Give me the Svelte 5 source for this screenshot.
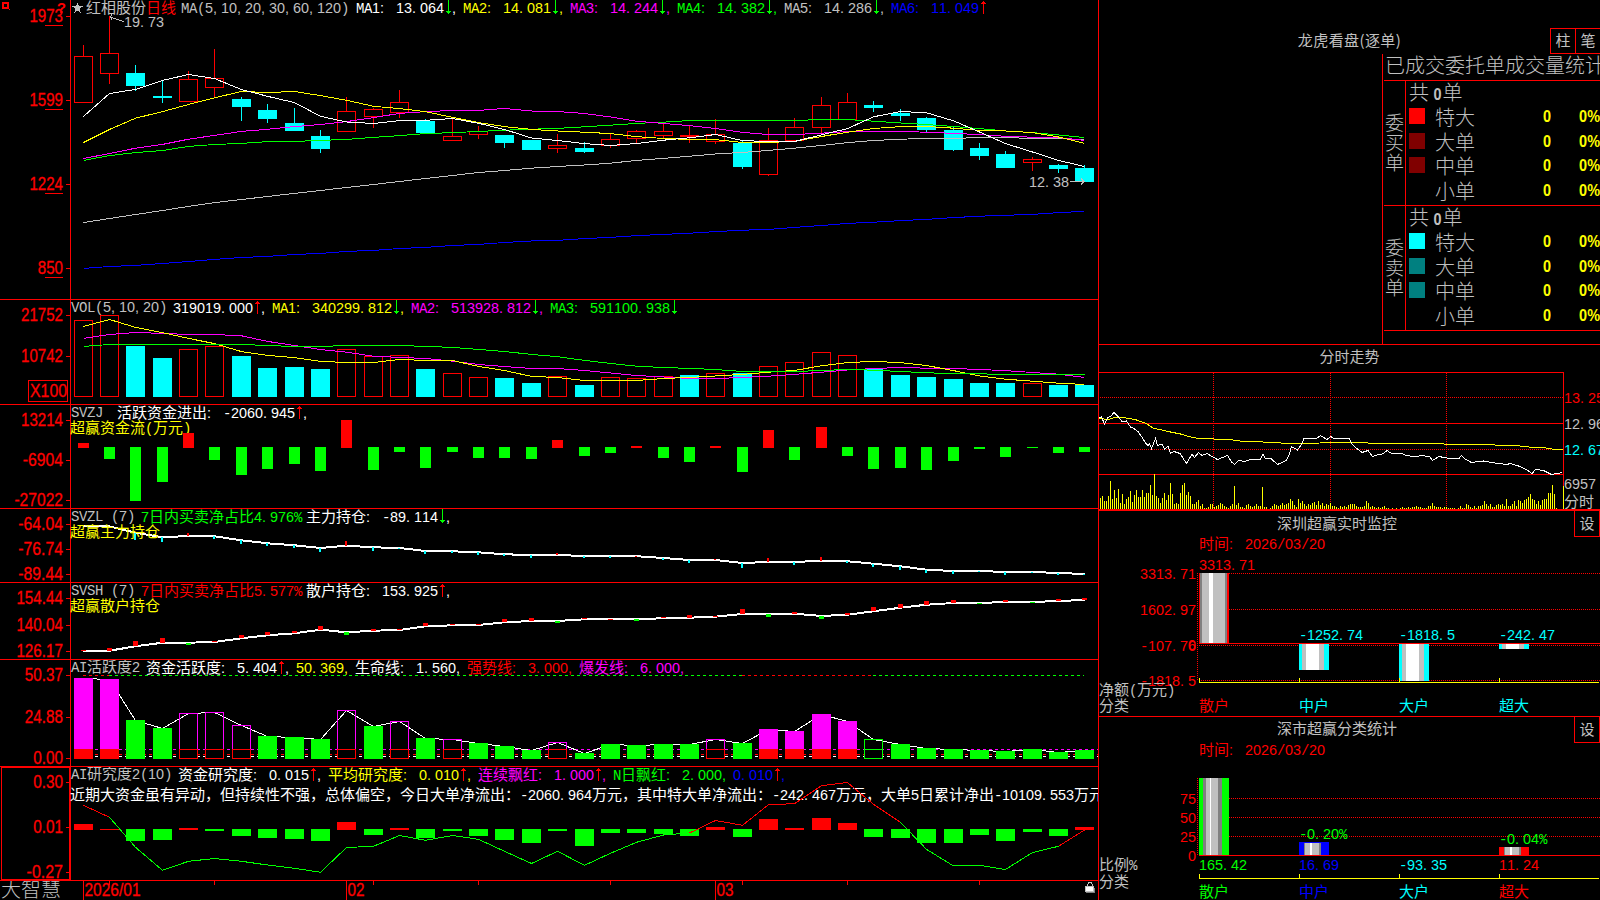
<script>
    const RED = '#ff0000'
    const CYAN = '#00ffff'
    const GREEN = '#00ff00'
    const YELLOW = '#ffff00'
    const PINK = '#ff00ff'
    const GRAY = '#c0c0c0'
    const WHITE = '#ffffff'
    const BLUE = '#0000ff'

    // left edge and centre of the nth day column
    const left = (i) => Math.floor(74.17 + 26.36 * i)
    const mid = (i) => left(i) + 9.5

    const points = (ys, from = 0, to = ys.length - 1) =>
        ys.slice(from, to + 1).map((y, i) => `${mid(i + from)},${y}`).join(' ')

    // splits a label into digit, latin (8px cells) and chinese (15px) runs
    function runs(s, x) {
        const out = []
        for (const part of s.match(/[0-9.,:]+|[^0-9.,:\u0080-\uffff]+|[\u0080-\uffff]+/g)) {
            const cjk = part.charCodeAt(0) > 127
            const num = /^[0-9.,:]/.test(part)
            const xs = cjk ? x : [...part].map((c, i) => x + i * 8).join(' ')
            out.push({ s: part, xs, cjk, num })
            x += part.length * (cjk ? 15 : 8)
        }
        return out
    }
    const width = (s) => [...s].reduce((w, c) => w + (c.charCodeAt(0) > 127 ? 15 : 8), 0)
    const axisWidth = (s) => [...s].reduce((w, c) => w + (c === '.' ? 4.6 : c === '-' ? 6.6 : c === '/' ? 6 : 8.4), 0)

    // high, body top, body bottom, low, rising
    const candles = [
        [45, 56, 103, 103, 1], [16, 53, 74, 84, 1], [65, 73, 86, 91, 0], [80, 96, 98, 103, 0], [71, 79, 102, 102, 1],
        [49, 78, 88, 97, 1], [97, 99, 107, 121, 0], [104, 110, 119, 123, 0], [108, 123, 131, 131, 0], [130, 136, 149, 153, 0],
        [97, 111, 132, 132, 1], [108, 109, 117, 128, 1], [90, 102, 113, 118, 1], [119, 121, 133, 133, 0], [118, 136, 141, 141, 1],
        [126, 131, 135, 139, 1], [135, 135, 143, 148, 0], [140, 140, 150, 150, 0], [134, 145, 149, 153, 1], [142, 148, 152, 153, 0],
        [134, 139, 146, 148, 1], [130, 131, 139, 144, 1], [124, 131, 136, 139, 1], [126, 135, 137, 143, 1], [119, 134, 142, 144, 1],
        [141, 143, 167, 169, 0], [128, 140, 175, 176, 1], [118, 127, 141, 141, 1], [97, 105, 128, 133, 1], [93, 102, 120, 120, 1],
        [101, 105, 108, 112, 0], [109, 113, 116, 121, 0], [117, 118, 130, 132, 0], [127, 130, 150, 151, 0], [143, 148, 156, 160, 0],
        [151, 154, 168, 168, 0], [157, 159, 163, 171, 1], [164, 165, 169, 173, 0], [165, 168, 182, 182, 0]
    ]

    const priceLines = [
        [BLUE, [268.4, 266.5, 265.4, 263.5, 261.5, 259.4, 257.5, 256.4, 254.5, 253.4, 251.4, 250.4, 248.5, 247.4, 245.5, 244.4, 242.5, 241, 240.4, 238.6, 237.4, 235.6, 234.4, 233.2, 231.6, 230.2, 229.4, 227.4, 225.5, 223.4, 222.2, 220.6, 219.4, 217.6, 216.2, 215.3, 214.4, 212.6, 211.4]],
        [GRAY, [222.5, 218.5, 214.5, 210.5, 206.4, 202.6, 199.5, 196.5, 193.4, 190.5, 187.5, 184.5, 181.5, 178.5, 175.5, 172.5, 170.5, 168.2, 166.5, 165, 163.2, 160.4, 158.4, 156.2, 154, 152.4, 150.4, 148.2, 145.5, 142.6, 140.5, 139.2, 138.5, 138.5, 137.5, 137.5, 138.5, 138.5, 139.5]],
        [GREEN, [160.4, 155.6, 152.6, 150.5, 146.4, 144.5, 143.4, 141.6, 141.4, 140.4, 139.4, 137.4, 135.6, 133.6, 132.6, 131.5, 130.2, 129.2, 128.4, 126.8, 125.2, 123.4, 122.2, 120.5, 120.5, 120.5, 120.5, 120.5, 119.5, 119.5, 121.2, 123, 124.5, 126.5, 128.6, 131, 132.6, 135, 137.5]],
        [PINK, [158.5, 153.5, 148.2, 144.4, 139.2, 135.4, 131.4, 129.3, 126.6, 124.5, 121.6, 117.6, 113.4, 111.6, 110.5, 110.4, 108.5, 111, 111.5, 113.5, 117, 121.2, 123.5, 125.6, 128.5, 132.4, 134.5, 134.5, 133.2, 131.5, 131.5, 131.5, 132.2, 133.4, 134.6, 136.3, 137.2, 137.6, 140.4]],
        [YELLOW, [142.5, 129.5, 118.2, 111.6, 104.5, 97.8, 91.5, 92.5, 91.5, 95.6, 100.3, 106.3, 108.6, 111.6, 117.4, 122.6, 126.6, 129.4, 131, 132.2, 133.6, 136.6, 138.5, 139.4, 139.6, 142.5, 142.5, 141.3, 136.5, 132.2, 128.5, 126.6, 126.5, 128.2, 130.4, 131, 132.6, 137, 143.4]],
        [WHITE, [116.5, 93.5, 89.4, 80.4, 74.5, 78.5, 89.6, 96.3, 102.6, 116.3, 122, 123.5, 120.6, 120.3, 118.5, 123.3, 129.5, 138, 140.5, 143.6, 145.5, 143.5, 140.2, 137.8, 134.5, 140.6, 141.5, 141.5, 134.8, 128.6, 116.8, 111.5, 112.8, 120.8, 132, 143.6, 152, 160.4, 166.5]]
    ]

    const volumes = [
        320, 315, 346, 358, 349, 346, 356, 368, 367, 369, 349, 356, 355, 369, 373, 377, 378, 383, 376, 385,
        377, 378, 376, 375, 373, 373, 366, 362, 352, 355, 369, 375, 377, 379, 383, 383, 383, 385, 385
    ]
    const volRising = (i) => candles[i][4] && i !== 23

    const volLines = [
        [PINK, [338.4, 334.5, 332.5, 333.4, 334.5, 334.5, 335.8, 341.4, 345.5, 349.5, 352.2, 356.2, 357.4, 358.5, 361.2, 364.5, 366.5, 368.5, 368.5, 370.5, 373, 375.5, 377, 378.5, 378.5, 377.5, 376.2, 374.4, 372.2, 370, 368.5, 367.5, 368.2, 368.5, 369.5, 370.6, 372.5, 374.2, 377.5]],
        [YELLOW, [326.5, 319.5, 327.4, 332.6, 338.4, 343.6, 351.6, 355.4, 357.6, 361.4, 362.5, 362.5, 359.5, 360.4, 360.5, 366.4, 370.5, 376.4, 377.5, 380.5, 380.5, 380.5, 378.5, 377.4, 376, 374.4, 372.2, 370.4, 365.8, 362.6, 361.4, 362.6, 365.5, 370.6, 376, 379.2, 381.2, 383.2, 384.5]],
        [GREEN, [346.4, 344.5, 344.5, 344.5, 344.5, 344.5, 344.5, 345.5, 346.5, 346.5, 345.5, 345.5, 345.5, 346.4, 347.4, 349.4, 351.5, 354.4, 356.7, 360.4, 363.4, 366.2, 367.5, 368.4, 369.5, 371.5, 371.5, 371.5, 370.5, 369.5, 370.2, 371.5, 372.8, 373.5, 373.8, 374.5, 374.5, 374.5, 374.5]]
    ]

    // bar ends around the zero row at 447
    const flow = [
        443, 459, 501, 482, 433, 460, 475, 469, 464, 471, 420, 470, 452, 468, 452, 458, 458, 459, 440, 456,
        453, 446, 458, 462, 446, 472, 430, 460, 427, 456, 469, 468, 470, 461, 449, 457, 448, 453, 452
    ]

    const mainHold = [
        525.7, 526.5, 532.7, 537.3, 536, 536.3, 540.3, 543.3, 545.3, 548, 545.7, 547.3, 548, 551, 551.3, 552.3, 554.3, 555, 555, 556,
        556, 556.2, 558, 560, 560, 563, 562, 562, 560.7, 561.3, 563.7, 566.3, 569.7, 571, 571, 572, 572, 573, 574
    ]
    const mainTicks = [
        525, 528, 540, 542, 533, 539, 544, 546, 548, 552, 541, 551, 549, 554, 553, 555, 556, 558, 553, 558,
        558, 556, 560, 563, 559, 568, 558, 565, 557, 563, 567, 570, 573, 574, 572, 575, 573, 575, 575
    ]
    const retailHold = [
        651, 650.7, 646.3, 642.7, 642.7, 642, 638.3, 635.3, 633.3, 629.7, 632.3, 630.7, 630, 626.3, 625.3, 625, 622.3, 621, 621, 619.3,
        619, 619, 618.3, 617.7, 616.7, 614, 613.7, 613.7, 616, 614.7, 611.3, 607.7, 604.7, 603, 603, 602, 602, 601, 600
    ]
    const retailTicks = [
        650, 648, 641, 638, 645, 641, 635, 632, 631, 626, 635, 629, 629, 623, 624, 624, 619, 618, 623, 618,
        618.5, 621, 617, 615, 616, 609, 617, 612, 619, 613, 607, 604, 601, 600, 604, 600, 603, 599, 598
    ]

    // M / G filled, m / g outlined
    const activity = [
        ['M', 678], ['M', 679], ['G', 720], ['G', 728], ['m', 713], ['m', 712], ['m', 725], ['G', 736], ['G', 737], ['G', 739],
        ['m', 710], ['G', 726], ['m', 721], ['G', 738], ['m', 739], ['G', 743], ['G', 746], ['G', 750], ['m', 742], ['G', 753],
        ['G', 744], ['G', 745], ['G', 744], ['G', 744], ['m', 739], ['G', 743], ['M', 729], ['M', 731], ['M', 714], ['M', 721],
        ['g', 739], ['G', 744], ['G', 748], ['G', 749], ['G', 750], ['G', 751], ['G', 749], ['G', 752], ['G', 750]
    ]

    const research = [
        824, 829, 841, 840, 828, 831, 836, 838, 839, 841, 822, 835, 828, 838, 831, 836, 840, 843, 831, 846,
        833, 833, 834, 836, 827, 837, 819, 828, 818, 823, 837, 838, 843, 843, 835, 841, 832, 836, 827
    ]
    const researchLine = [
        805.3, 817.3, 847.3, 870.3, 861.3, 858.5, 861.3, 865, 868.3, 872.3, 847.5, 846.3, 835.5, 840.3, 835.5, 839.3, 851.3, 863.5, 851.3, 865.3,
        853.3, 842.3, 835, 833, 820.5, 825.3, 804.7, 803.7, 785.7, 782.5, 804.3, 822.3, 849.3, 866, 865.3, 869.5, 852.5, 846.3, 830
    ]
    const researchParts = [[0, 1, RED], [1, 23, GREEN], [23, 31, RED], [31, 37, GREEN], [37, 38, RED]]

    const legends = {
        price: [
            { x: 86, y: 13, s: '红相股份', c: GRAY },
            { x: 146, y: 13, s: '日线', c: RED },
            { x: 181, y: 13, s: 'MA(5,10,20,30,60,120)', c: GRAY },
            { x: 356, y: 13, s: 'MA1: 13.064', c: WHITE, dir: -1, comma: true },
            { x: 463, y: 13, s: 'MA2: 14.081', c: YELLOW, dir: -1, comma: true },
            { x: 570, y: 13, s: 'MA3: 14.244', c: PINK, dir: -1, comma: true },
            { x: 677, y: 13, s: 'MA4: 14.382', c: GREEN, dir: -1, comma: true },
            { x: 784, y: 13, s: 'MA5: 14.286', c: GRAY, dir: -1, comma: true },
            { x: 891, y: 13, s: 'MA6: 11.049', c: BLUE, dir: 1 }
        ],
        vol: [
            { x: 71, y: 312, s: 'VOL(5,10,20)', c: GRAY },
            { x: 173, y: 313, s: '319019.000', c: WHITE, dir: 1, comma: true },
            { x: 272, y: 313, s: 'MA1: 340299.812', c: YELLOW, dir: -1, comma: true },
            { x: 411, y: 313, s: 'MA2: 513928.812', c: PINK, dir: -1, comma: true },
            { x: 550, y: 313, s: 'MA3: 591100.938', c: GREEN, dir: -1 }
        ],
        flow: [
            { x: 71, y: 417, s: 'SVZJ', c: GRAY },
            { x: 117, y: 418, s: '活跃资金进出: -2060.945', c: WHITE, dir: 1, comma: true },
            { x: 70, y: 433, s: '超赢资金流(万元)', c: YELLOW }
        ],
        main: [
            { x: 71, y: 521, s: 'SVZL (7)', c: GRAY },
            { x: 141, y: 522, s: '7日内买卖净占比4.976%', c: GREEN },
            { x: 306, y: 522, s: '主力持仓: -89.114', c: WHITE, dir: -1, comma: true },
            { x: 70, y: 537, s: '超赢主力持仓', c: YELLOW }
        ],
        retail: [
            { x: 71, y: 595, s: 'SVSH (7)', c: GRAY },
            { x: 141, y: 596, s: '7日内买卖净占比5.577%', c: RED },
            { x: 306, y: 596, s: '散户持仓: 153.925', c: WHITE, dir: 1, comma: true },
            { x: 70, y: 611, s: '超赢散户持仓', c: YELLOW }
        ],
        activity: [
            { x: 71, y: 672, s: 'AI活跃度2', c: GRAY },
            { x: 146, y: 673, s: '资金活跃度: 5.404', c: WHITE, dir: 1, comma: true },
            { x: 296, y: 673, s: '50.369,', c: YELLOW },
            { x: 355, y: 673, s: '生命线: 1.560,', c: WHITE },
            { x: 467, y: 673, s: '强势线: 3.000,', c: RED },
            { x: 579, y: 673, s: '爆发线: 6.000,', c: PINK }
        ],
        research: [
            { x: 71, y: 779, s: 'AI研究度2(10)', c: GRAY },
            { x: 178, y: 780, s: '资金研究度: 0.015', c: WHITE, dir: 1, comma: true },
            { x: 328, y: 780, s: '平均研究度: 0.010', c: YELLOW, dir: 1, comma: true },
            { x: 478, y: 780, s: '连续飘红: 1.000', c: PINK, dir: 1, comma: true },
            { x: 613, y: 780, s: 'N日飘红: 2.000,', c: GREEN },
            { x: 733, y: 780, s: '0.010', c: BLUE, dir: 1, comma: true },
            { x: 70, y: 800, s: '近期大资金虽有异动，但持续性不强，总体偏空，今日大单净流出：-2060.964万元，其中特大单净流出：-242.467万元，大单5日累计净出-10109.553万元', c: WHITE }
        ]
    }

    const orders = [
        { side: '委买单', rows: [['特大', '#ff0000'], ['大单', '#800000'], ['中单', '#800000'], ['小单', 'transparent']] },
        { side: '委卖单', rows: [['特大', '#00ffff'], ['大单', '#008080'], ['中单', '#008080'], ['小单', 'transparent']] }
    ]

    const tickPrice = '1099,418 1101.5,417 1104.5,424 1108,417.5 1111,416 1114,412.5 1118,416.5 1122.5,422 1126.5,421 1130.5,427 1134,428.5 1138,431.5 1141.5,436.5 1146,443.5 1148,445.5 1149.5,443.5 1151.5,448.5 1155.5,438.5 1157.5,445.5 1162,444 1164.5,449 1168,446.5 1170.5,453.5 1174,451.5 1180,453.5 1186.5,463.5 1192,454 1194.5,457.5 1198.5,452.5 1202,455.5 1207,453.5 1213,457 1217.5,459.5 1227.5,455.5 1231.5,462 1234.5,464.5 1238.5,460.5 1245,461.5 1250,459.5 1260,460 1263,454.5 1265.5,458.5 1271.5,459 1277.5,464.5 1286.5,460.5 1289.5,454 1291.5,446.5 1297.5,450 1300.5,446 1304,438.5 1316.5,438.5 1320.5,435.5 1327,439.5 1330.5,436.5 1334,438.5 1349.5,438.5 1352,444 1355.5,447.5 1362,452.5 1368,450.5 1372.5,456.5 1378.5,454.5 1382.5,454 1387,450.5 1390.5,453 1401.5,453.5 1406.5,455.5 1416.5,457 1420.5,455.5 1429.5,456.5 1432.5,460.5 1439,456.5 1446.5,458 1458.5,459 1461.5,455.5 1465,459 1471.5,462.5 1483.5,461 1495,463 1506.5,464.5 1510.5,463.5 1518.5,466 1526.5,469.5 1532,473.5 1535.5,469.5 1543.5,470.5 1551.5,474.5 1562.5,472.5'
    const tickAverage = '1099,418.5 1108,419.5 1115,417.5 1123.5,417.5 1135,419.5 1146.5,423.5 1153,428 1168,431.5 1183,434.5 1188,436.5 1198,438.5 1230,439.5 1243,441.5 1263,442 1290,443.5 1320,443 1330,442.3 1366,442.4 1370,443.5 1443,443.6 1446,444.6 1495,445 1498,445.5 1520,446 1533,447.5 1546,448 1555,449.5 1563,449.5'
    // one bar every 2px
    const minuteBars = [
        11, 13, 8, 8, 13, 28, 10, 19, 11, 20, 6, 15, 5, 10, 12, 18, 7, 14, 19, 12, 12, 19, 12, 16, 16, 24, 14, 35, 13, 11, 6, 11, 16,
        9, 14, 26, 15, 5, 6, 5, 16, 24, 26, 14, 17, 13, 5, 5, 7, 9, 3, 5, 1, 1, 2, 5, 5, 2, 3, 4, 6, 5, 3, 2, 1, 3, 5, 23, 4, 6, 2, 2, 1,
        4, 5, 3, 2, 3, 5, 3, 3, 22, 2, 2, 0, 1, 3, 5, 4, 3, 4, 6, 4, 5, 6, 10, 8, 4, 2, 10, 6, 8, 5, 3, 5, 4, 6, 7, 4, 8, 4, 6, 3, 5, 4, 6, 3,
        3, 2, 1, 3, 2, 3, 2, 4, 5, 5, 5, 3, 2, 2, 2, 3, 8, 6, 2, 3, 2, 1, 2, 1, 2, 3, 1, 1, 0, 1, 0, 1, 0, 1, 2, 1, 1, 2, 1, 2, 2, 3, 2, 2,
        1, 1, 1, 3, 3, 6, 3, 2, 2, 2, 1, 2, 2, 1, 1, 1, 1, 0, 1, 3, 1, 1, 5, 4, 2, 1, 3, 1, 3, 3, 4, 8, 5, 3, 5, 2, 2, 4, 5, 4, 5, 3, 10, 3, 3, 5,
        8, 3, 9, 8, 6, 9, 10, 12, 15, 10, 9, 5, 8, 4, 9, 10, 10, 16, 16, 24, 15, 1
    ]

    // stripes are [offset, width, colour] across the 30px bar
    const netBars = [
        { x: 1199, y: 573, h: 70, name: '散户', c: RED, value: '3313.71', ty: 570, stripes: [[0, 30, RED], [1, 27, '#808080'], [3, 23, GRAY], [10, 4, WHITE]] },
        { x: 1299, y: 644, h: 26, name: '中户', c: CYAN, value: '-1252.74', ty: 640, stripes: [[0, 30, CYAN], [3, 22, GRAY], [7, 13, WHITE]] },
        { x: 1399, y: 644, h: 37, name: '大户', c: CYAN, value: '-1818.5', ty: 640, stripes: [[0, 30, CYAN], [3, 22, GRAY], [7, 13, WHITE]] },
        { x: 1499, y: 644, h: 5, name: '超大', c: CYAN, value: '-242.47', ty: 640, stripes: [[0, 30, CYAN], [3, 22, GRAY], [7, 13, WHITE]] }
    ]
    const shareBars = [
        { x: 1199, y: 778, h: 77, name: '散户', c: GREEN, value: '165.42', stripes: [[0, 30, GREEN], [4, 19, '#808080'], [7, 12, GRAY], [11, 1, WHITE]] },
        { x: 1299, y: 842, h: 13, name: '中户', c: BLUE, value: '16.69', note: '-0.20%', stripes: [[0, 30, BLUE], [5, 17, '#808080', 1], [6, 14, GRAY, 1], [11, 2, WHITE, 1]] },
        { x: 1399, y: 855, h: 0, name: '大户', c: CYAN, value: '-93.35', stripes: [] },
        { x: 1499, y: 847, h: 8, name: '超大', c: RED, value: '11.24', note: '-0.04%', stripes: [[0, 30, RED], [5, 17, '#808080'], [6, 14, GRAY], [11, 2, WHITE]] }
    ]
</script>

<style>
    :global(body){
        background: #000;
        overflow: hidden;
    }
    .terminal{
        display: flex;
        width: 1600px;
        height: 900px;
        overflow: hidden;
        background: #000;
        color: #c0c0c0;
        font-family: "Noto Sans CJK SC", sans-serif;
        font-size: 15px;
    }
    .charts{
        display: flex;
        flex-direction: column;
        width: 1098px;
        flex: none;
        border-right: 1px solid red;
    }
    .side{
        display: flex;
        flex-direction: column;
        width: 501px;
        flex: none;
    }
    svg{
        display: block;
        flex: none;
        shape-rendering: crispEdges;
    }
    .panel{
        border-bottom: 1px solid red;
    }
    .panel.last{
        border-bottom: none;
    }
    text{
        white-space: pre;
        font-family: "Liberation Mono", monospace;
        font-size: 14px;
    }
    text.num{
        font-family: "Liberation Sans", sans-serif;
        font-size: 14.4px;
    }
    text.cjk{
        font-family: "Noto Sans CJK SC", sans-serif;
        font-size: 15px;
    }
    text.axis{
        font-family: "Liberation Sans", sans-serif;
        font-size: 17.5px;
        stroke: red;
        stroke-width: 0.3px;
    }
    text.brand{
        font-size: 20px;
        font-weight: 300;
    }
    text.mark{
        font-size: 15px;
        font-weight: bold;
    }
    polyline{
        fill: none;
    }

    .title{
        text-align: center;
        line-height: 22px;
        white-space: nowrap;
    }
    .longhu{
        position: relative;
        display: flex;
        flex-direction: column;
        height: 344px;
        flex: none;
        border-bottom: 1px solid red;
    }
    .longhu .title{
        height: 25px;
        padding-top: 29px;
        letter-spacing: 0.4px;
    }
    .tools{
        position: absolute;
        right: 0;
        top: 28px;
        display: flex;
    }
    .tool{
        box-sizing: border-box;
        width: 25px;
        height: 26px;
        border: solid red;
        border-width: 1px 0 1px 1px;
        text-align: center;
        line-height: 21px;
    }
    .orders{
        width: 217px;
        flex: 1;
        margin-left: auto;
        border-left: 1px solid red;
        font-size: 20px;
        font-weight: 300;
        overflow: hidden;
    }
    .orders h2{
        margin: 0 0 0 1px;
        padding-left: 1px;
        height: 26px;
        line-height: 22px;
        font-size: 20px;
        font-weight: 300;
        white-space: nowrap;
        border-bottom: 1px solid red;
    }
    .group{
        display: flex;
        height: 124px;
        margin-left: 1px;
        border-bottom: 1px solid red;
    }
    .name{
        width: 20px;
        padding: 31px 0 0 1px;
        line-height: 20px;
        border-right: 1px solid red;
        font-size: 19px;
    }
    .rows{
        flex: 1;
        display: flex;
        flex-direction: column;
    }
    .total{
        height: 25px;
        line-height: 21px;
        padding-left: 3px;
    }
    .total b, .count{
        font-family: "Liberation Sans", sans-serif;
        font-size: 17px;
        font-weight: bold;
        transform: scaleX(0.85);
        transform-origin: right;
    }
    .total b{
        display: inline-block;
        margin: 0 1px 0 3px;
    }
    .row{
        display: grid;
        grid-template-columns: 29px 96px 20px 49px;
        height: 25px;
        line-height: 21px;
    }
    .swatch{
        width: 16px;
        height: 16px;
        margin: 2px 0 0 3px;
    }
    .count{
        color: yellow;
        text-align: right;
    }

    .intraday{
        height: 164px;
        flex: none;
        border-bottom: 2px solid red;
    }
    .intraday .title{
        height: 27px;
        line-height: 21px;
    }
    .monitor{
        position: relative;
        flex: none;
        height: 205px;
        border-bottom: 1px solid red;
    }
    .monitor.last{
        height: 183px;
        border: none;
    }
    .monitor .title{
        margin-right: 25px;
        height: 24px;
        line-height: 23px;
    }
    .monitor .tool{
        position: absolute;
        right: 0;
        top: -1px;
        width: 26px;
        height: 27px;
        border-width: 1px;
        line-height: 23px;
    }
    .monitor.last .title{
        line-height: 22px;
    }
</style>

{#snippet label(x, y, s, color)}
    <g fill={color}>
        {#each runs(s, x) as run}
            <text x={run.xs} {y} class:cjk={run.cjk} class:num={run.num}>{run.s}</text>
        {/each}
    </g>
{/snippet}

{#snippet legend(items)}
    {#each items as item}
        <g>
            {@render label(item.x, item.y, item.s, item.c)}
            {#if item.dir}
                {@const ax = Math.round(item.x + width(item.s) + 4)}
                {#if item.dir > 0}
                    <path d="M{ax} {item.y - 12}h1v13h-1zM{ax - 1} {item.y - 11}h3v1h-3zM{ax - 2} {item.y - 10}h5v1h-5z" fill={RED} />
                {:else}
                    <path d="M{ax} {item.y - 13}h1v14h-1zM{ax - 1} {item.y - 1}h3v1h-3zM{ax - 2} {item.y - 2}h5v1h-5z" fill={GREEN} />
                {/if}
            {/if}
            {#if item.comma}
                <text class="num" x={item.x + width(item.s) + 8} y={item.y} fill={item.c}>,</text>
            {/if}
        </g>
    {/each}
{/snippet}

{#snippet axis(top, height, marks)}
    <g fill={RED}>
        <rect x="70" y={top} width="1" {height} />
        {#each marks as [s, base]}
            <text class="axis" x={63 - axisWidth(s)} y={base} textLength={axisWidth(s)} lengthAdjust="spacingAndGlyphs">{s}</text>
            <rect x="66" y={base - 6} width="4" height="1" />
        {/each}
    </g>
{/snippet}

{#snippet line(ys, color, w)}
    <polyline points={points(ys)} stroke={color} stroke-width={w} />
{/snippet}

{#snippet box(x, y, h, filled, color)}
    {#if filled}
        <rect {x} {y} width="19" height={h} fill={color} />
    {:else}
        <rect x={x + 0.5} y={y + 0.5} width="18" height={Math.max(h - 1, 1)} fill="none" stroke={color} />
    {/if}
{/snippet}

<div class="terminal">
    <div class="charts">
        <svg class="panel" width="1098" height="299" viewBox="0 0 1098 299">
            {@render axis(0, 299, [['1973', 22], ['1599', 106], ['1224', 190], ['850', 274]])}
            {#each [25, 109, 193, 277] as y}
                <rect x="45" {y} width="18" height="1" fill={RED} />
            {/each}
            <rect x="3" y="3" width="5" height="5" fill="none" stroke={RED} stroke-width="2" />
            <path d="M8 8l2 2" stroke={RED} />
            <text class="mark" x="57" y="13" fill={RED}>?</text>
            {#each candles as [high, top, bottom, low, up], i}
                {@const c = up ? RED : CYAN}
                <rect x={left(i) + 9} y={high} width="1" height={top - high} fill={c} />
                <rect x={left(i) + 9} y={bottom} width="1" height={low - bottom} fill={c} />
                {@render box(left(i), top, bottom - top, !up, c)}
            {/each}
            {#each priceLines as [c, ys]}
                {@render line(ys, c, 1)}
            {/each}
            <path d="M77.500 2.500l1.400 3.700 3.900.2-3 2.500 1 3.900-3.300-2.200-3.300 2.200 1-3.900-3-2.500 3.900-.2z" fill={GRAY} />
            {@render legend(legends.price)}
            <path d="M124 21.500L117 19.500L110 17M112 14.500L110 17L112 19.500" fill="none" stroke={GRAY} />
            {@render label(124, 27, '19.73', GRAY)}
            {@render label(1029, 187, '12.38', GRAY)}
            <path d="M1070 181.500H1084M1081 178.500L1084 181.500L1081 184.500" fill="none" stroke={GRAY} />
        </svg>

        <svg class="panel" width="1098" height="104" viewBox="0 300 1098 104">
            {@render axis(300, 104, [['21752', 321], ['10742', 362]])}
            <rect x="28.5" y="380.5" width="39" height="21" fill="none" stroke={RED} />
            <text class="axis" x="30" y="397" fill={RED} textLength="37" lengthAdjust="spacingAndGlyphs">X100</text>
            {#each volumes as top, i}
                {@render box(left(i), top, 397 - top, !volRising(i), volRising(i) ? RED : CYAN)}
            {/each}
            {#each volLines as [c, ys]}
                {@render line(ys, c, 1)}
            {/each}
            {@render legend(legends.vol)}
        </svg>

        <svg class="panel" width="1098" height="103" viewBox="0 405 1098 103">
            {@render axis(405, 103, [['13214', 426], ['-6904', 466], ['-27022', 506]])}
            {@render legend(legends.flow)}
            {#each flow as y, i}
                {#if y < 447}
                    <rect x={left(i) + 4} {y} width="11" height={448 - y} fill={RED} />
                {:else}
                    <rect x={left(i) + 4} y="447" width="11" height={y - 447} fill={GREEN} />
                {/if}
            {/each}
        </svg>

        <svg class="panel" width="1098" height="73" viewBox="0 509 1098 73">
            {@render axis(509, 73, [['-64.04', 530], ['-76.74', 555], ['-89.44', 580]])}
            {@render line(mainHold, WHITE, 2)}
            {#each mainTicks as y, i}
                {@const base = mainHold[i]}
                <rect x={left(i) + 8} y={Math.min(y, base)} width="2" height={Math.max(Math.abs(y - base), 1)} fill={y < base ? RED : CYAN} />
            {/each}
            {@render legend(legends.main)}
        </svg>

        <svg class="panel" width="1098" height="76" viewBox="0 583 1098 76">
            {@render axis(583, 76, [['154.44', 604], ['140.04', 631], ['126.17', 657]])}
            {@render line(retailHold, WHITE, 2)}
            {#each retailTicks as y, i}
                {@const base = retailHold[i]}
                <rect x={left(i) + 7} y={Math.min(y, base)} width="5" height={Math.max(Math.abs(y - base), 1)} fill={y < base ? RED : GREEN} />
            {/each}
            {@render legend(legends.retail)}
        </svg>

        <svg class="panel" width="1098" height="106" viewBox="0 660 1098 106">
            {@render axis(660, 106, [['50.37', 681], ['24.88', 723], ['0.00', 764]])}
            <g stroke-dasharray="3 3">
                <path d="M83 675.500H109M742 675.500H873" stroke={RED} />
                <path d="M109 675.500H742M873 675.500H1084" stroke={GREEN} />
                <path d="M83 749.500H1098" stroke={PINK} />
                <path d="M83 754.500H1098" stroke={RED} />
                <path d="M83 756.500H1098" stroke={WHITE} />
            </g>
            <polyline points={points(activity.map((a) => a[1] + 0.5))} stroke={WHITE} />
            {#each activity as [kind, top], i}
                {@const pink = kind.toLowerCase() === 'm'}
                {@const filled = kind === 'M' || kind === 'G'}
                {#if !filled}
                    <rect x={left(i) + 1} y="749" width="17" height="9" fill="#000" />
                {/if}
                {@render box(left(i), top, 759 - top, filled, pink ? PINK : GREEN)}
                {#if pink || !filled}
                    {@render box(left(i), 749, 10, filled, pink ? RED : GREEN)}
                {/if}
            {/each}
            {@render legend(legends.activity)}
        </svg>

        <svg class="panel" width="1098" height="113" viewBox="0 767 1098 113">
            {@render axis(767, 113, [['0.30', 788], ['0.01', 833], ['-0.27', 878]])}
            <rect x="1.5" y="767.5" width="68" height="112" fill="none" stroke={RED} />
            {#each research as y, i}
                {#if y < 830}
                    <rect x={left(i)} {y} width="19" height={830 - y} fill={RED} />
                {:else}
                    <rect x={left(i)} y="829" width="19" height={y - 829} fill={GREEN} />
                {/if}
            {/each}
            {@render legend(legends.research)}
            {#each researchParts as [from, to, c]}
                <polyline points={points(researchLine, from, to)} stroke={c} />
            {/each}
        </svg>

        <svg class="panel last" width="1098" height="19" viewBox="0 881 1098 19">
            <text class="cjk brand" x="1" y="897" fill={GRAY}>大智慧</text>
            <g fill={RED}>
                {#each [109, 214, 373, 478, 610, 742, 847, 979] as x}
                    <rect {x} y="881" width="1" height="4" />
                {/each}
                {#each [[83, '2026/01', 56], [346, '02', 17], [715, '03', 17]] as [x, s, w]}
                    <rect {x} y="881" width="1" height="19" />
                    <text class="axis" x={x + 1.5} y="896" textLength={w} lengthAdjust="spacingAndGlyphs">{s}</text>
                {/each}
            </g>
            <path d="M1087.500 886V884.500L1089 882.500H1091L1092.500 884.500V886" fill="none" stroke={GRAY} />
            <rect x="1086" y="888" width="9" height="5" fill="#808080" />
            <rect x="1085" y="886" width="9" height="6" fill={GRAY} />
            <rect x="1086" y="887" width="7" height="4" fill={WHITE} />
        </svg>
    </div>

    <div class="side">
        <div class="longhu">
            <div class="title">龙虎看盘(逐单)</div>
            <div class="tools">
                <div class="tool">柱</div>
                <div class="tool">笔</div>
            </div>
            <div class="orders">
                <h2>已成交委托单成交量统计</h2>
                {#each orders as group}
                    <div class="group">
                        <div class="name">{group.side}</div>
                        <div class="rows">
                            <div class="total">共<b>0</b>单</div>
                            {#each group.rows as [name, color]}
                                <div class="row">
                                    <div class="swatch" style="background: {color}"></div>
                                    <div>{name}</div>
                                    <div class="count">0</div>
                                    <div class="count">0%</div>
                                </div>
                            {/each}
                        </div>
                    </div>
                {/each}
            </div>
        </div>

        <div class="intraday">
            <div class="title">分时走势</div>
            <svg width="501" height="137" viewBox="1099 372 501 137">
                <g stroke={RED}>
                    <path d="M1099 372.500H1563.500V509M1099 423.500H1563M1099 474.500H1563" fill="none" />
                    <path d="M1100 397.500H1563M1100 449.500H1563M1213.500 373V509M1330.500 373V509M1446.500 373V509" stroke-dasharray="1 1" />
                </g>
                {#each minuteBars as h, i}
                    <rect x={1100 + i * 2} y={509 - h} width="1" height={h} fill={YELLOW} />
                {/each}
                <rect x="1563" y="486" width="1" height="23" fill={YELLOW} />
                <polyline points={tickAverage} stroke={YELLOW} />
                <polyline points={tickPrice} stroke={WHITE} />
                {@render label(1564, 403, '13.25', RED)}
                {@render label(1564, 429, '12.96', GRAY)}
                {@render label(1564, 455, '12.67', CYAN)}
                {@render label(1564, 489, '6957', GRAY)}
                {@render label(1564, 507, '分时', GRAY)}
            </svg>
        </div>

        <div class="monitor">
            <div class="title">深圳超赢实时监控</div>
            <div class="tool">设</div>
            <svg width="501" height="181" viewBox="1099 535 501 181">
                {@render label(1199, 549, '时间: 2026/03/20', RED)}
                <path d="M1197.500 573V681M1199 573.500H1600M1199 609.500H1600M1199 645.500H1600M1199 680.500H1600" stroke={RED} stroke-dasharray="1 1" />
                {#each netBars as bar}
                    {#each bar.stripes as [dx, w, c]}
                        <rect x={bar.x + dx} y={bar.y} width={w} height={bar.h} fill={c} />
                    {/each}
                    <rect x={bar.x} y="678" width="1" height="5" fill={YELLOW} />
                    {@render label(bar.x, bar.ty, bar.value, bar.c)}
                    {@render label(bar.x, 711, bar.name, bar.c)}
                {/each}
                <rect x="1199" y="643" width="401" height="1" fill={RED} />
                <rect x="1199" y="682" width="400" height="1" fill={YELLOW} />
                {#each [['3313.71', 579], ['1602.97', 615], ['-107.76', 651], ['0', 650], ['-1818.5', 686]] as [s, y]}
                    {@render label(1196 - width(s), y, s, RED)}
                {/each}
                {@render label(1099, 695, '净额(万元)', GRAY)}
                {@render label(1099, 711, '分类', GRAY)}
            </svg>
        </div>

        <div class="monitor last">
            <div class="title">深市超赢分类统计</div>
            <div class="tool">设</div>
            <svg width="501" height="159" viewBox="1099 741 501 159">
                {@render label(1199, 755, '时间: 2026/03/20', RED)}
                <path d="M1197.500 778V855M1199 798.500H1600M1199 817.500H1600M1199 836.500H1600" stroke={RED} stroke-dasharray="1 1" />
                {#each shareBars as bar}
                    {#each bar.stripes as [dx, w, c, inset = 0]}
                        <rect x={bar.x + dx} y={bar.y + inset} width={w} height={bar.h - inset} fill={c} />
                    {/each}
                    {#if bar.note}
                        {@render label(bar.x, bar.y - 3, bar.note, GREEN)}
                    {/if}
                    <rect x={bar.x} y="874" width="1" height="5" fill={YELLOW} />
                    {@render label(bar.x, 870, bar.value, bar.c)}
                    {@render label(bar.x, 897, bar.name, bar.c)}
                {/each}
                <rect x="1199" y="855" width="401" height="1" fill={RED} />
                <rect x="1199" y="878" width="400" height="1" fill={YELLOW} />
                {#each [['75', 804], ['50', 823], ['25', 842], ['0', 861]] as [s, y]}
                    {@render label(1196 - width(s), y, s, RED)}
                {/each}
                {@render label(1099, 870, '比例%', GRAY)}
                {@render label(1099, 887, '分类', GRAY)}
            </svg>
        </div>
    </div>
</div>
